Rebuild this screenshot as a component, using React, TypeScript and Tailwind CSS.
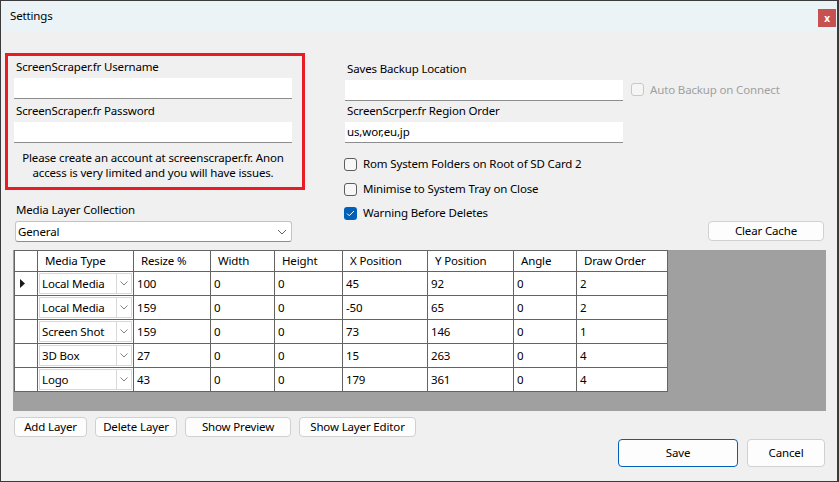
import React from 'react';

const rows = [
  { type: 'Local Media', resize: '100', w: '0', h: '0', x: '45', y: '92', angle: '0', order: '2', current: true },
  { type: 'Local Media', resize: '159', w: '0', h: '0', x: '-50', y: '65', angle: '0', order: '2' },
  { type: 'Screen Shot', resize: '159', w: '0', h: '0', x: '73', y: '146', angle: '0', order: '1' },
  { type: '3D Box', resize: '27', w: '0', h: '0', x: '15', y: '263', angle: '0', order: '4' },
  { type: 'Logo', resize: '43', w: '0', h: '0', x: '179', y: '361', angle: '0', order: '4' },
];

const headers = ['Media Type', 'Resize %', 'Width', 'Height', 'X Position', 'Y Position', 'Angle', 'Draw Order'];

const Chevron = () => (
  <svg width="10" height="6" viewBox="0 0 10 6" fill="none">
    <path d="M1 1l4 4 4-4" stroke="#606060" strokeWidth="1" />
  </svg>
);

const Check = ({ checked, disabled }: { checked?: boolean; disabled?: boolean }) =>
  checked ? (
    <div className="w-[13px] h-[13px] rounded-[3px] bg-[#005fb8] flex items-center justify-center shrink-0">
      <svg width="9" height="7" viewBox="0 0 9 7" fill="none">
        <path d="M1 3.5l2.2 2.2L8 1" stroke="white" strokeWidth="1" />
      </svg>
    </div>
  ) : (
    <div
      className={
        'w-[13px] h-[13px] rounded-[3px] border shrink-0 ' +
        (disabled ? 'border-[#c8c8c8] bg-[#f5f5f5]' : 'border-[#5d5d5d] bg-[#f7f7f7]')
      }
    />
  );

const TextBox = ({ value, className }: { value?: string; className?: string }) => (
  <div className={'h-[21px] shrink-0 bg-white border-b border-[#8d8d8d] flex items-center pl-[2px] ' + (className || '')}>
    {value}
  </div>
);

const Btn = ({ label, className }: { label: string; className: string }) => (
  <div className={'h-[20px] bg-[#fdfdfd] border border-[#d0d0d0] rounded-[4px] flex items-center justify-center ' + className}>
    {label}
  </div>
);

export default function App() {
  return (
    <div className="w-[839px] h-[482px] bg-[#3b3b3b] pt-px pl-px text-[11.5px] tracking-[-0.15px] leading-4 text-black font-['Segoe_UI','Noto_Sans',sans-serif]">
      <div className="w-[836px] h-[480px] bg-[#f0f0f0] flex flex-col">
        {/* title bar */}
        <div className="h-[30px] bg-[#ebf3f7] flex items-center justify-between pl-[9px]">
          <span>Settings</span>
          <div className="w-[18px] h-[18px] bg-[#c75050] text-white text-[10px] font-bold flex items-center justify-center mr-px mt-[3px]">
            x
          </div>
        </div>

        <div className="flex flex-col pl-[4px]">
          <div className="flex mt-[22px]">
            {/* left column */}
            <div className="w-[300px] flex flex-col">
              <div className="h-[137px] border-[3px] border-[#e81c24] pt-[3px] pl-[6px] pr-[10px] flex flex-col">
                <div className="pl-[2px]">ScreenScraper.fr Username</div>
                <TextBox className="mt-[3px]" />
                <div className="pl-[2px] mt-[4px]">ScreenScraper.fr Password</div>
                <TextBox className="mt-[3px]" />
                <div className="mt-[7px] text-center leading-[15px] whitespace-nowrap">
                  Please create an account at screenscraper.fr. Anon
                  <br />
                  access is very limited and you will have issues.
                </div>
              </div>
              <div className="ml-[11px] mt-[12px]">Media Layer Collection</div>
              <div className="ml-[10px] mt-[3px] w-[277px] h-[21px] bg-white border border-[#c4c4c4] border-b-[#8d8d8d] rounded-[3px] flex items-center justify-between pl-[2px] pr-[4px]">
                <span>General</span>
                <Chevron />
              </div>
            </div>

            {/* right column */}
            <div className="ml-[39px] w-[480px] pt-[8px] flex flex-col">
              <div className="pl-[3px]">Saves Backup Location</div>
              <div className="mt-[3px] flex items-center">
                <TextBox className="ml-px w-[278px]" />
                <div className="ml-[8px] mb-[2px] flex items-center">
                  <Check disabled />
                  <span className="ml-[6px] text-[#a0a0a0]">Auto Backup on Connect</span>
                </div>
              </div>
              <div className="pl-[3px] mt-[2px]">ScreenScrper.fr Region Order</div>
              <TextBox className="ml-px w-[278px] mt-[3px]" value="us,wor,eu,jp" />
              <div className="mt-[13px] flex items-center">
                <Check />
                <span className="ml-[6px]">Rom System Folders on Root of SD Card 2</span>
              </div>
              <div className="mt-[9px] flex items-center">
                <Check />
                <span className="ml-[6px]">Minimise to System Tray on Close</span>
              </div>
              <div className="mt-[8px] flex items-center">
                <Check checked />
                <span className="ml-[6px]">Warning Before Deletes</span>
              </div>
              <div className="flex justify-end">
                <Btn label="Clear Cache" className="w-[116px]" />
              </div>
            </div>
          </div>

          {/* data grid */}
          <div className="ml-[8px] mt-[8px] w-[813px] h-[161px] bg-[#a0a0a0] pl-px">
            <div className="w-[654px] bg-[#646464] p-px grid grid-cols-[22px_95px_76px_63px_67px_84px_85px_62px_90px] grid-rows-[20px_repeat(5,23px)] gap-px">
              <div className="bg-white" />
              {headers.map((h) => (
                <div key={h} className="bg-white flex items-center pl-[7px]">
                  {h}
                </div>
              ))}
              {rows.map((r, i) => (
                <React.Fragment key={i}>
                  <div className="bg-white flex items-center pl-[5px]">
                    {r.current && (
                      <svg width="6" height="9" viewBox="0 0 6 9">
                        <path d="M0 0l5 4.5L0 9z" fill="#1a1a1a" />
                      </svg>
                    )}
                  </div>
                  <div className="bg-white p-px">
                    <div className="h-full border border-[#d8d8d8] flex items-stretch">
                      <div className="flex-1 flex items-center pl-[2px]">{r.type}</div>
                      <div className="w-[15px] border-l border-[#d8d8d8] flex items-center justify-center">
                        <svg width="8" height="5" viewBox="0 0 8 5" fill="none">
                          <path d="M0.5 0.5l3.5 3.5 3.5-3.5" stroke="#808080" strokeWidth="1" />
                        </svg>
                      </div>
                    </div>
                  </div>
                  {[r.resize, r.w, r.h, r.x, r.y, r.angle, r.order].map((v, j) => (
                    <div key={j} className="bg-white flex items-center pl-[3px]">
                      {v}
                    </div>
                  ))}
                </React.Fragment>
              ))}
            </div>
          </div>

          {/* layer buttons */}
          <div className="ml-[9px] mt-[6px] flex gap-[8px]">
            <Btn label="Add Layer" className="w-[73px]" />
            <Btn label="Delete Layer" className="w-[82px]" />
            <Btn label="Show Preview" className="w-[106px]" />
            <Btn label="Show Layer Editor" className="w-[117px]" />
          </div>

          {/* dialog buttons */}
          <div className="mt-[2px] pr-[12px] flex justify-end gap-[9px]">
            <div className="w-[120px] h-[28px] bg-[#fdfdfd] border border-[#005fb8] rounded-[4px] flex items-center justify-center">
              Save
            </div>
            <div className="w-[78px] h-[28px] bg-[#fdfdfd] border border-[#d0d0d0] rounded-[4px] flex items-center justify-center">
              Cancel
            </div>
          </div>
        </div>
      </div>
    </div>
  );
}
